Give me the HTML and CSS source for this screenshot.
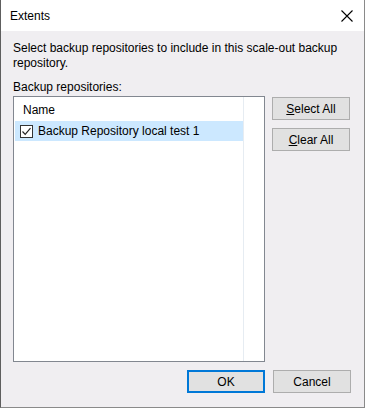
FILE: index.html
```
<!DOCTYPE html>
<html>
<head>
<meta charset="utf-8">
<link rel="stylesheet" href="styles.css">
</head>
<body>
<div class="window">
  <div class="titlebar">
    <span class="title">Extents</span>
    <svg class="close" width="12" height="12" viewBox="0 0 12 12"><path d="M0.5 0.5 L11.5 11.5 M11.5 0.5 L0.5 11.5" stroke="#000" stroke-width="1.1" fill="none"/></svg>
  </div>
  <div class="content">
    <p class="desc">Select backup repositories to include in this scale-out backup repository.</p>
    <div class="label">Backup repositories:</div>
    <div class="main">
      <div class="listbox">
        <div class="col">
          <div class="header">Name</div>
          <div class="row selected">
            <span class="check"><svg width="11" height="11" viewBox="0 0 11 11"><path d="M1.5 5.5 L4.2 8.3 L9.5 2.2" stroke="#222" stroke-width="1.2" fill="none"/></svg></span>
            <span>Backup Repository local test 1</span>
          </div>
        </div>
      </div>
      <div class="side">
        <button class="btn"><u>S</u>elect All</button>
        <button class="btn"><u>C</u>lear All</button>
      </div>
    </div>
    <div class="footer">
      <button class="btn default">OK</button>
      <button class="btn">Cancel</button>
    </div>
  </div>
</div>
</body>
</html>
```
FILE: styles.css
```
html, body {
  margin: 0;
  padding: 0;
  background: #f0eef1;
}
body {
  font-family: "Liberation Sans", Arial, sans-serif;
  font-size: 12px;
  color: #000;
}
.window {
  width: 365px;
  height: 408px;
  box-sizing: border-box;
  border-left: 1px solid #5e5e5e;
  border-right: 1px solid #8a8a8a;
  border-bottom: 1px solid #8a8a8a;
  display: flex;
  flex-direction: column;
  background: #f0eef1;
}
.titlebar {
  height: 31px;
  background: #fff;
  display: flex;
  align-items: center;
  justify-content: space-between;
  padding: 0 11px 0 9px;
  flex: none;
}
.title {
  font-size: 12px;
}
.close {
  display: block;
}
.content {
  padding: 10px 13px 0 12px;
  display: flex;
  flex-direction: column;
  flex: 1;
}
.desc {
  margin: 0;
  line-height: 15px;
}
.label {
  margin-top: 9px;
  line-height: 15px;
}
.main {
  margin-top: 1px;
  display: flex;
  gap: 7px;
}
.listbox {
  width: 252px;
  height: 266px;
  box-sizing: border-box;
  border: 1px solid #828790;
  background: #fff;
  padding: 0 20px 0 1px;
}
.col {
  height: 100%;
  border-right: 1px solid #e6ecf2;
}
.header {
  height: 24px;
  line-height: 26px;
  padding-left: 8px;
}
.row {
  height: 20px;
  display: flex;
  align-items: center;
  gap: 5px;
  padding-left: 5px;
}
.selected {
  background: #cce8ff;
}
.check {
  width: 11px;
  height: 11px;
  border: 1px solid #333;
  background: #fff;
  display: flex;
}
.side {
  display: flex;
  flex-direction: column;
  gap: 8px;
  padding-top: 1px;
}
.btn {
  width: 78px;
  height: 23px;
  box-sizing: border-box;
  background: #e1e1e1;
  border: 1px solid #adadad;
  font-family: "Liberation Sans", Arial, sans-serif;
  font-size: 12px;
  color: #000;
  padding: 0;
  margin: 0;
}
.footer {
  display: flex;
  justify-content: flex-end;
  gap: 8px;
  margin-top: 8px;
}
.default {
  border: 2px solid #0078d7;
}
```
